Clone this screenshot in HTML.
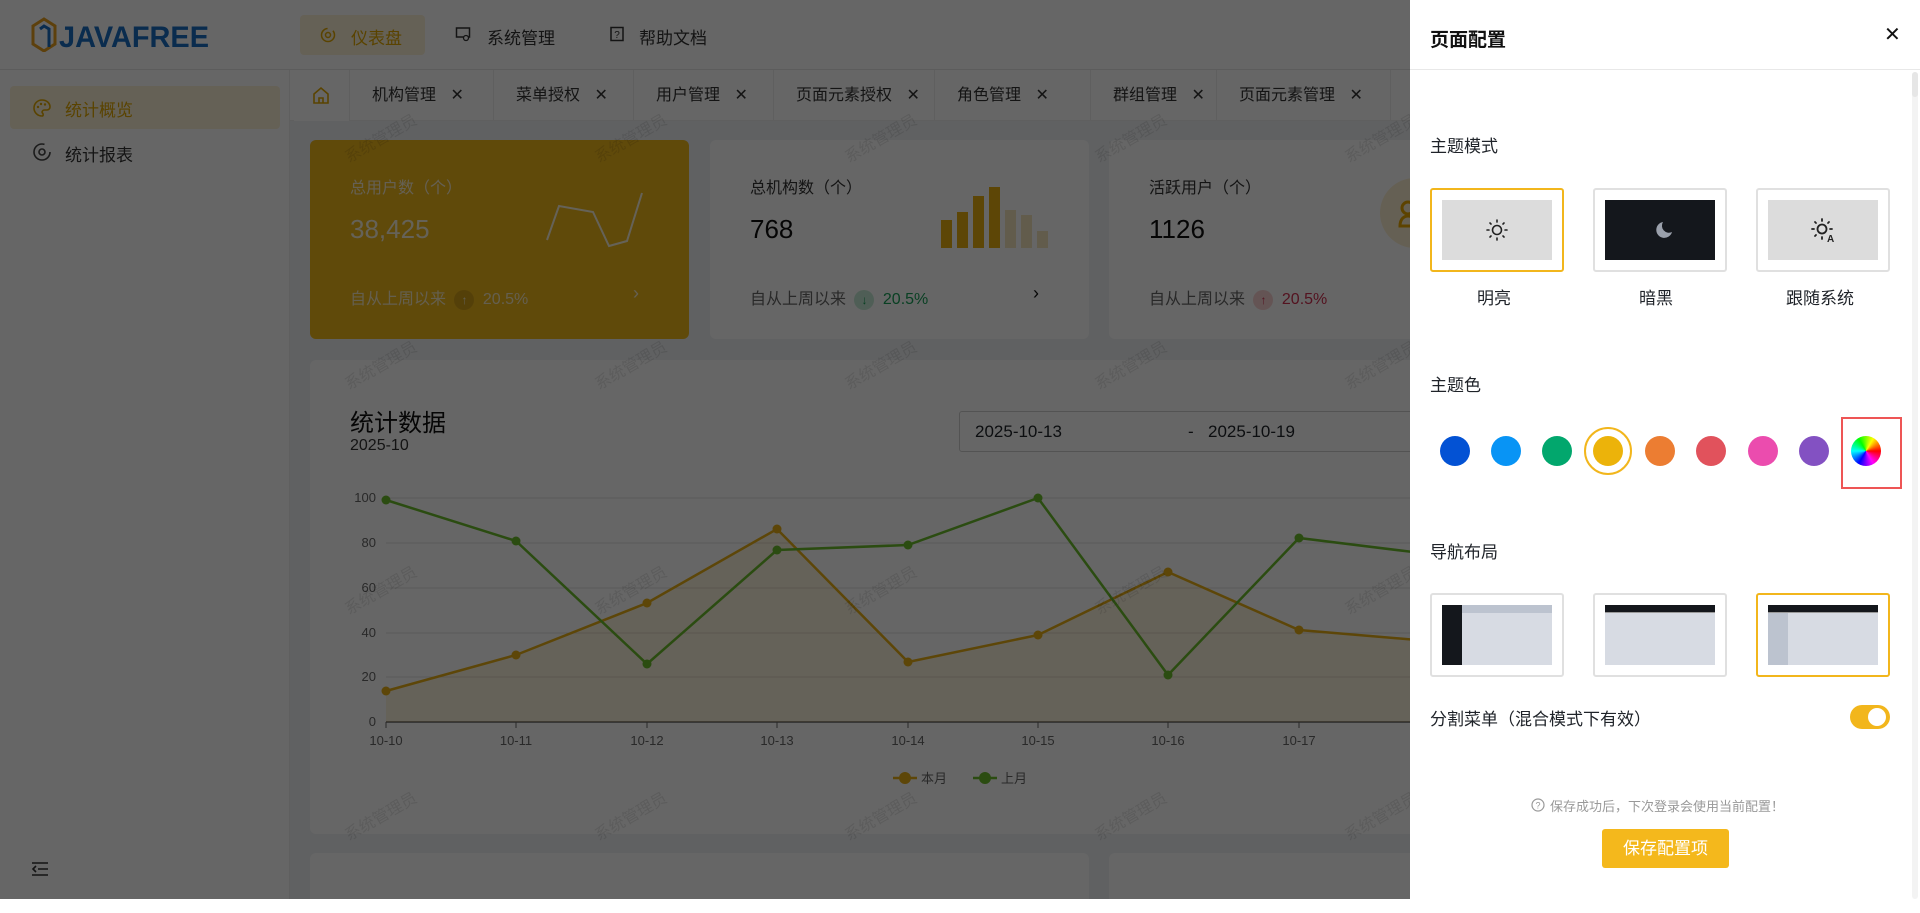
<!DOCTYPE html>
<html><head><meta charset="utf-8"><style>
*{margin:0;padding:0;box-sizing:border-box}
body{width:1920px;height:899px;overflow:hidden;position:relative;font-family:"Liberation Sans","Noto Sans CJK SC",sans-serif;background:#fff;color:#1f2329}
.a{position:absolute}
.hdr{left:0;top:0;width:1410px;height:70px;background:#fff;border-bottom:1px solid #e6e6e6}
.side{left:0;top:70px;width:290px;height:829px;background:#fff;border-right:1px solid #eee}
.content{left:290px;top:121px;width:1120px;height:778px;background:#f0f2f5}
.tabs{left:290px;top:70px;width:1120px;height:51px;background:#fff;border-bottom:1px solid #eee}
.tab{position:absolute;top:0;height:51px;border-left:1px solid #eee;font-size:16px;line-height:51px;padding-left:22px;color:#333}
.card{position:absolute;background:#fff;border-radius:6px}
.wm{position:absolute;font-size:16px;color:rgba(0,0,0,.1);transform:rotate(-30deg);white-space:nowrap}
.ov{left:0;top:0;width:1410px;height:899px;background:rgba(0,0,0,.6)}
.drawer{left:1410px;top:0;width:510px;height:899px;background:#fff}
.lbl{position:absolute;font-size:17px;color:#1f2329}
.box{position:absolute;width:134px;height:84px;border:2px solid #e0e0e0;border-radius:3px;background:#fff}
.box.sel{border-color:#f2b61c}
.inner{position:absolute;left:10px;top:10px;width:110px;height:60px;background:#dcdcdc}
.dot{position:absolute;width:30px;height:30px;border-radius:50%;top:436px}
</style></head><body>

<div class="a hdr">
 <svg class="a" style="left:31px;top:17px" width="182" height="35" viewBox="0 0 182 35">
  <path d="M2 9 L13 2 L24 9 L24 27 L13 34 L2 27Z" fill="none" stroke="#e8a020" stroke-width="3"/>
  <path d="M9 12 L13 9 L18 12 L18 30" fill="none" stroke="#1a6fc4" stroke-width="3"/>
  <text x="28" y="30" font-family="Liberation Sans" font-weight="bold" font-size="30" fill="#1a6fc4" textLength="150" lengthAdjust="spacingAndGlyphs">JAVAFREE</text>
 </svg>
 <div class="a" style="left:300px;top:15px;width:125px;height:40px;background:#fdf3d8;border-radius:4px"></div>
 <svg class="a" style="left:320px;top:27px" width="16" height="16" viewBox="0 0 16 16"><circle cx="8" cy="8" r="6.5" fill="none" stroke="#e0a800" stroke-width="1.5" stroke-dasharray="30 6"/><circle cx="8" cy="8" r="2.5" fill="none" stroke="#e0a800" stroke-width="1.5"/></svg>
 <div class="a" style="left:351px;top:24px;font-size:17px;color:#e0a800">仪表盘</div>
 <svg class="a" style="left:455px;top:26px" width="16" height="16" viewBox="0 0 16 16"><rect x="1.5" y="2" width="13" height="9" fill="none" stroke="#333" stroke-width="1.5"/><circle cx="11" cy="12" r="2.5" fill="#fff" stroke="#333" stroke-width="1.3"/></svg>
 <div class="a" style="left:487px;top:24px;font-size:17px;color:#333">系统管理</div>
 <svg class="a" style="left:609px;top:26px" width="16" height="16" viewBox="0 0 16 16"><rect x="2" y="1.5" width="12" height="13" fill="none" stroke="#333" stroke-width="1.5"/><text x="8" y="12" font-size="10" text-anchor="middle" fill="#333">?</text></svg>
 <div class="a" style="left:639px;top:24px;font-size:17px;color:#333">帮助文档</div>
</div>

<div class="a side">
 <div class="a" style="left:10px;top:16px;width:270px;height:43px;background:#fdf3d8;border-radius:4px"></div>
 <svg class="a" style="left:32px;top:28px" width="20" height="20" viewBox="0 0 20 20"><path d="M10 2a8 8 0 1 0 0 16c1.5 0 1.5-2 .5-3s0-3 2-3h2.5a3 3 0 0 0 3-3C18 5 14.5 2 10 2z" fill="none" stroke="#e0a800" stroke-width="1.6"/><circle cx="6" cy="9" r="1.2" fill="#e0a800"/><circle cx="9" cy="6" r="1.2" fill="#e0a800"/><circle cx="13" cy="6.5" r="1.2" fill="#e0a800"/></svg>
 <div class="a" style="left:65px;top:26px;font-size:17px;color:#e0a800">统计概览</div>
 <svg class="a" style="left:32px;top:72px" width="20" height="20" viewBox="0 0 20 20"><circle cx="10" cy="10" r="8" fill="none" stroke="#444" stroke-width="1.6" stroke-dasharray="40 10"/><circle cx="10" cy="10" r="3" fill="none" stroke="#444" stroke-width="1.6"/></svg>
 <div class="a" style="left:65px;top:71px;font-size:17px;color:#333">统计报表</div>
 <svg class="a" style="left:31px;top:791px" width="18" height="16" viewBox="0 0 18 16"><path d="M1 2h16M7 8h10M1 14h16M5 5L2 8l3 3" fill="none" stroke="#333" stroke-width="1.6"/></svg>
</div>

<div class="a tabs">
 <div class="a" style="left:4px;top:0;width:55px;height:51px;background:#fff"></div>
 <svg class="a" style="left:22px;top:16px" width="18" height="18" viewBox="0 0 18 18"><path d="M2 8L9 2l7 6v9H2z M7 17v-5h4v5" fill="none" stroke="#e0a800" stroke-width="1.6"/></svg>
 <div class="tab" style="left:59px;width:144px">机构管理 <span style="margin-left:10px">✕</span></div>
 <div class="tab" style="left:203px;width:140px">菜单授权 <span style="margin-left:10px">✕</span></div>
 <div class="tab" style="left:343px;width:140px">用户管理 <span style="margin-left:10px">✕</span></div>
 <div class="tab" style="left:483px;width:161px">页面元素授权 <span style="margin-left:10px">✕</span></div>
 <div class="tab" style="left:644px;width:156px">角色管理 <span style="margin-left:10px">✕</span></div>
 <div class="tab" style="left:800px;width:126px">群组管理 <span style="margin-left:10px">✕</span></div>
 <div class="tab" style="left:926px;width:174px">页面元素管理 <span style="margin-left:10px">✕</span></div>
 <div class="tab" style="left:1100px;width:20px"></div>
</div>

<div class="a content"></div>

<div class="card" style="left:310px;top:140px;width:379px;height:199px;background:#f0b81b">
 <div class="a" style="left:40px;top:34px;font-size:16px;color:rgba(255,255,255,.8)">总用户数（个）</div>
 <div class="a" style="left:40px;top:74px;font-size:26px;color:rgba(255,255,255,.85)">38,425</div>
 <svg class="a" style="left:0;top:0" width="379" height="199"><polyline points="237,100 249,66 283,72 299,106 317,101 332,53" fill="none" stroke="rgba(255,255,255,.85)" stroke-width="2"/></svg>
 <div class="a" style="left:40px;top:145px;font-size:16px;color:rgba(255,255,255,.75)">自从上周以来 <span style="display:inline-block;width:20px;height:20px;border-radius:50%;background:rgba(0,0,0,.12);text-align:center;line-height:20px;font-size:12px;margin:0 4px">↑</span> 20.5%</div>
 <div class="a" style="left:323px;top:143px;font-size:18px;color:rgba(255,255,255,.8)">›</div>
</div>
<div class="card" style="left:710px;top:140px;width:379px;height:199px">
 <div class="a" style="left:40px;top:34px;font-size:16px;color:#333">总机构数（个）</div>
 <div class="a" style="left:40px;top:74px;font-size:26px;color:#111">768</div>
 <svg class="a" style="left:0;top:0" width="379" height="199">
  <g fill="#e8b010"><rect x="231" y="80" width="11" height="28"/><rect x="247" y="72" width="11" height="36"/><rect x="263" y="56" width="11" height="52"/><rect x="279" y="47" width="11" height="61"/></g>
  <g fill="#f5e7bd"><rect x="295" y="70" width="11" height="38"/><rect x="311" y="75" width="11" height="33"/><rect x="327" y="91" width="11" height="17"/></g>
 </svg>
 <div class="a" style="left:40px;top:145px;font-size:16px;color:#666">自从上周以来 <span style="display:inline-block;width:20px;height:20px;border-radius:50%;background:#c6ecd6;color:#18a058;text-align:center;line-height:20px;font-size:12px;margin:0 4px">↓</span> <span style="color:#18a058">20.5%</span></div>
 <div class="a" style="left:323px;top:143px;font-size:18px;color:#111">›</div>
</div>
<div class="card" style="left:1109px;top:140px;width:400px;height:199px">
 <div class="a" style="left:40px;top:34px;font-size:16px;color:#333">活跃用户（个）</div>
 <div class="a" style="left:40px;top:74px;font-size:26px;color:#111">1126</div>
 <div class="a" style="left:271px;top:38px;width:70px;height:70px;border-radius:50%;background:#fdf1d2"></div>
 <svg class="a" style="left:289px;top:60px" width="24" height="28" viewBox="0 0 24 28"><circle cx="10" cy="8" r="6" fill="none" stroke="#e8a800" stroke-width="3"/><path d="M2 26c0-7 4-10 8-10s8 3 8 10z" fill="none" stroke="#e8a800" stroke-width="3"/></svg>
 <div class="a" style="left:40px;top:145px;font-size:16px;color:#666">自从上周以来 <span style="display:inline-block;width:20px;height:20px;border-radius:50%;background:#fbd3d3;color:#d03050;text-align:center;line-height:20px;font-size:12px;margin:0 4px">↑</span> <span style="color:#d03050">20.5%</span></div>
</div>

<div class="card" style="left:310px;top:360px;width:1200px;height:474px"></div>
<div class="a" style="left:350px;top:403px;font-size:24px;color:#111">统计数据</div>
<div class="a" style="left:350px;top:437px;font-size:16px;color:#333">2025-10</div>
<div class="a" style="left:959px;top:411px;width:480px;height:41px;border:1px solid #d0d0d0;border-radius:3px;background:#fff;font-size:17px;line-height:39px">
 <span class="a" style="left:15px">2025-10-13</span><span class="a" style="left:228px">-</span><span class="a" style="left:248px">2025-10-19</span>
</div>
<svg class="a" style="left:0;top:0" width="1410" height="899">
 <g stroke="#e0e0e0" stroke-width="1"><line x1="386" y1="498" x2="1410" y2="498"/><line x1="386" y1="543" x2="1410" y2="543"/><line x1="386" y1="588" x2="1410" y2="588"/><line x1="386" y1="633" x2="1410" y2="633"/><line x1="386" y1="677" x2="1410" y2="677"/></g>
 <line x1="386" y1="722" x2="1410" y2="722" stroke="#666" stroke-width="1.5"/>
 <g stroke="#666"><line x1="386" y1="722" x2="386" y2="728"/><line x1="516" y1="722" x2="516" y2="728"/><line x1="647" y1="722" x2="647" y2="728"/><line x1="777" y1="722" x2="777" y2="728"/><line x1="908" y1="722" x2="908" y2="728"/><line x1="1038" y1="722" x2="1038" y2="728"/><line x1="1168" y1="722" x2="1168" y2="728"/><line x1="1299" y1="722" x2="1299" y2="728"/></g>
 <g font-size="13" fill="#666" text-anchor="end" font-family="Liberation Sans"><text x="376" y="502">100</text><text x="376" y="547">80</text><text x="376" y="592">60</text><text x="376" y="637">40</text><text x="376" y="681">20</text><text x="376" y="726">0</text></g>
 <g font-size="13" fill="#666" text-anchor="middle" font-family="Liberation Sans"><text x="386" y="745">10-10</text><text x="516" y="745">10-11</text><text x="647" y="745">10-12</text><text x="777" y="745">10-13</text><text x="908" y="745">10-14</text><text x="1038" y="745">10-15</text><text x="1168" y="745">10-16</text><text x="1299" y="745">10-17</text></g>
 <polygon points="386,722 386,691 516,655 647,603 777,529 908,662 1038,635 1168,572 1299,630 1429,641 1429,722" fill="rgba(240,190,40,.15)"/>
 <polyline points="386,691 516,655 647,603 777,529 908,662 1038,635 1168,572 1299,630 1429,641" fill="none" stroke="#e8ae14" stroke-width="2.5"/>
 <polyline points="386,500 516,541 647,664 777,550 908,545 1038,498 1168,675 1299,538 1429,554" fill="none" stroke="#6cbd2c" stroke-width="2.5"/>
 <g fill="#e8ae14"><circle cx="386" cy="691" r="4.5"/><circle cx="516" cy="655" r="4.5"/><circle cx="647" cy="603" r="4.5"/><circle cx="777" cy="529" r="4.5"/><circle cx="908" cy="662" r="4.5"/><circle cx="1038" cy="635" r="4.5"/><circle cx="1168" cy="572" r="4.5"/><circle cx="1299" cy="630" r="4.5"/></g>
 <g fill="#6cbd2c"><circle cx="386" cy="500" r="4.5"/><circle cx="516" cy="541" r="4.5"/><circle cx="647" cy="664" r="4.5"/><circle cx="777" cy="550" r="4.5"/><circle cx="908" cy="545" r="4.5"/><circle cx="1038" cy="498" r="4.5"/><circle cx="1168" cy="675" r="4.5"/><circle cx="1299" cy="538" r="4.5"/></g>
 <line x1="893" y1="778" x2="917" y2="778" stroke="#e8ae14" stroke-width="2.5"/><circle cx="905" cy="778" r="6" fill="#e8ae14"/>
 <text x="921" y="783" font-size="13" fill="#666">本月</text>
 <line x1="973" y1="778" x2="997" y2="778" stroke="#6cbd2c" stroke-width="2.5"/><circle cx="985" cy="778" r="6" fill="#6cbd2c"/>
 <text x="1001" y="783" font-size="13" fill="#666">上月</text>
</svg>
<div class="card" style="left:310px;top:853px;width:779px;height:60px"></div>
<div class="card" style="left:1109px;top:853px;width:400px;height:60px"></div>

<div class="wm" style="left:340px;top:125px">系统管理员</div><div class="wm" style="left:590px;top:125px">系统管理员</div><div class="wm" style="left:840px;top:125px">系统管理员</div><div class="wm" style="left:1090px;top:125px">系统管理员</div><div class="wm" style="left:1340px;top:125px">系统管理员</div>
<div class="wm" style="left:340px;top:352px">系统管理员</div><div class="wm" style="left:590px;top:352px">系统管理员</div><div class="wm" style="left:840px;top:352px">系统管理员</div><div class="wm" style="left:1090px;top:352px">系统管理员</div><div class="wm" style="left:1340px;top:352px">系统管理员</div>
<div class="wm" style="left:340px;top:577px">系统管理员</div><div class="wm" style="left:590px;top:577px">系统管理员</div><div class="wm" style="left:840px;top:577px">系统管理员</div><div class="wm" style="left:1090px;top:577px">系统管理员</div><div class="wm" style="left:1340px;top:577px">系统管理员</div>
<div class="wm" style="left:340px;top:803px">系统管理员</div><div class="wm" style="left:590px;top:803px">系统管理员</div><div class="wm" style="left:840px;top:803px">系统管理员</div><div class="wm" style="left:1090px;top:803px">系统管理员</div><div class="wm" style="left:1340px;top:803px">系统管理员</div>

<div class="a ov"></div>

<div class="a drawer">
 <div class="a" style="left:0;top:69px;width:510px;height:1px;background:#e8e8e8"></div>
 <div class="a" style="left:20px;top:25px;font-size:19px;font-weight:bold;color:#111">页面配置</div>
 <div class="a" style="left:474px;top:22px;font-size:20px;color:#111">✕</div>
 <div class="a" style="left:502px;top:72px;width:6px;height:827px;background:#f3f3f3;border-radius:3px"></div>
 <div class="a" style="left:502px;top:72px;width:6px;height:25px;background:#e6e6e6;border-radius:3px"></div>

 <div class="lbl" style="left:20px;top:132px">主题模式</div>
 <div class="box sel" style="left:20px;top:188px"><div class="inner"></div>
  <svg class="a" style="left:53px;top:28px" width="24" height="24" viewBox="0 0 24 24"><circle cx="12" cy="12" r="4.5" fill="none" stroke="#222" stroke-width="1.6"/><g stroke="#222" stroke-width="1.6" stroke-linecap="round"><line x1="12" y1="2" x2="12" y2="4"/><line x1="12" y1="20" x2="12" y2="22"/><line x1="2" y1="12" x2="4" y2="12"/><line x1="20" y1="12" x2="22" y2="12"/><line x1="5" y1="5" x2="6" y2="6"/><line x1="18" y1="18" x2="19" y2="19"/><line x1="5" y1="19" x2="6" y2="18"/><line x1="18" y1="6" x2="19" y2="5"/></g></svg>
 </div>
 <div class="box" style="left:183px;top:188px"><div class="inner" style="background:#14171c"></div>
  <svg class="a" style="left:55px;top:29px" width="24" height="24" viewBox="0 0 24 24"><path d="M13 3a8 8 0 1 0 9 10A7 7 0 0 1 13 3z" fill="#9aa0ab"/></svg>
 </div>
 <div class="box" style="left:346px;top:188px"><div class="inner"></div>
  <svg class="a" style="left:52px;top:27px" width="28" height="26" viewBox="0 0 28 26"><circle cx="12" cy="12" r="4.5" fill="none" stroke="#222" stroke-width="1.8"/><g stroke="#222" stroke-width="1.8" stroke-linecap="round"><line x1="12" y1="2" x2="12" y2="4"/><line x1="12" y1="20" x2="12" y2="22"/><line x1="2" y1="12" x2="4" y2="12"/><line x1="20" y1="12" x2="22" y2="12"/><line x1="5" y1="5" x2="6" y2="6"/><line x1="5" y1="19" x2="6" y2="18"/><line x1="18" y1="6" x2="19" y2="5"/></g><text x="17" y="25" font-size="10" font-weight="bold" fill="#222" font-family="Liberation Sans">A</text></svg>
 </div>
 <div class="lbl" style="left:67px;top:284px">明亮</div>
 <div class="lbl" style="left:229px;top:284px">暗黑</div>
 <div class="lbl" style="left:376px;top:284px">跟随系统</div>

 <div class="lbl" style="left:20px;top:371px">主题色</div>
 <div class="dot" style="left:30px;background:#0352d4"></div>
 <div class="dot" style="left:81px;background:#0894f5"></div>
 <div class="dot" style="left:132px;background:#02a76d"></div>
 <div class="a" style="left:174px;top:427px;width:48px;height:48px;border-radius:50%;border:2px solid #f2b61c"></div>
 <div class="dot" style="left:183px;background:#ecb30a"></div>
 <div class="dot" style="left:235px;background:#ec7d32"></div>
 <div class="dot" style="left:286px;background:#e1525c"></div>
 <div class="dot" style="left:338px;background:#eb4cae"></div>
 <div class="dot" style="left:389px;background:#8351c2"></div>
 <div class="dot" style="left:441px;background:conic-gradient(from 90deg,red,#f0f,blue,cyan,lime,yellow,red)"></div>
 <div class="a" style="left:431px;top:417px;width:61px;height:72px;border:2px solid #ee5555"></div>

 <div class="lbl" style="left:20px;top:538px">导航布局</div>
 <div class="box" style="left:20px;top:593px"><div class="inner" style="background:#d7dbe3"><div class="a" style="left:0;top:0;width:110px;height:8px;background:#bcc3cf"></div><div class="a" style="left:0;top:0;width:20px;height:60px;background:#14171c"></div></div></div>
 <div class="box" style="left:183px;top:593px"><div class="inner" style="background:#d7dbe3"><div class="a" style="left:0;top:0;width:110px;height:7px;background:#14171c"></div><div class="a" style="left:0;top:7px;width:110px;height:1px;background:#999"></div></div></div>
 <div class="box sel" style="left:346px;top:593px"><div class="inner" style="background:#d7dbe3"><div class="a" style="left:0;top:0;width:110px;height:7px;background:#14171c"></div><div class="a" style="left:0;top:7px;width:110px;height:1px;background:#999"></div><div class="a" style="left:0;top:8px;width:20px;height:52px;background:#bcc3cf"></div></div></div>

 <div class="lbl" style="left:20px;top:705px">分割菜单（混合模式下有效）</div>
 <div class="a" style="left:440px;top:705px;width:40px;height:24px;border-radius:12px;background:#f2b61c"></div>
 <div class="a" style="left:458px;top:708px;width:18px;height:18px;border-radius:50%;background:#fff"></div>

 <svg class="a" style="left:121px;top:798px" width="14" height="14" viewBox="0 0 14 14"><circle cx="7" cy="7" r="6" fill="none" stroke="#999" stroke-width="1.2"/><text x="7" y="10.5" font-size="9" text-anchor="middle" fill="#999" font-family="Liberation Sans">?</text></svg>
 <div class="a" style="left:140px;top:796px;font-size:13px;color:#999">保存成功后，下次登录会使用当前配置！</div>
 <div class="a" style="left:192px;top:829px;width:127px;height:39px;background:#f4b81c;border-radius:3px;color:#fff;font-size:17px;text-align:center;line-height:39px">保存配置项</div>
</div>
</body></html>
